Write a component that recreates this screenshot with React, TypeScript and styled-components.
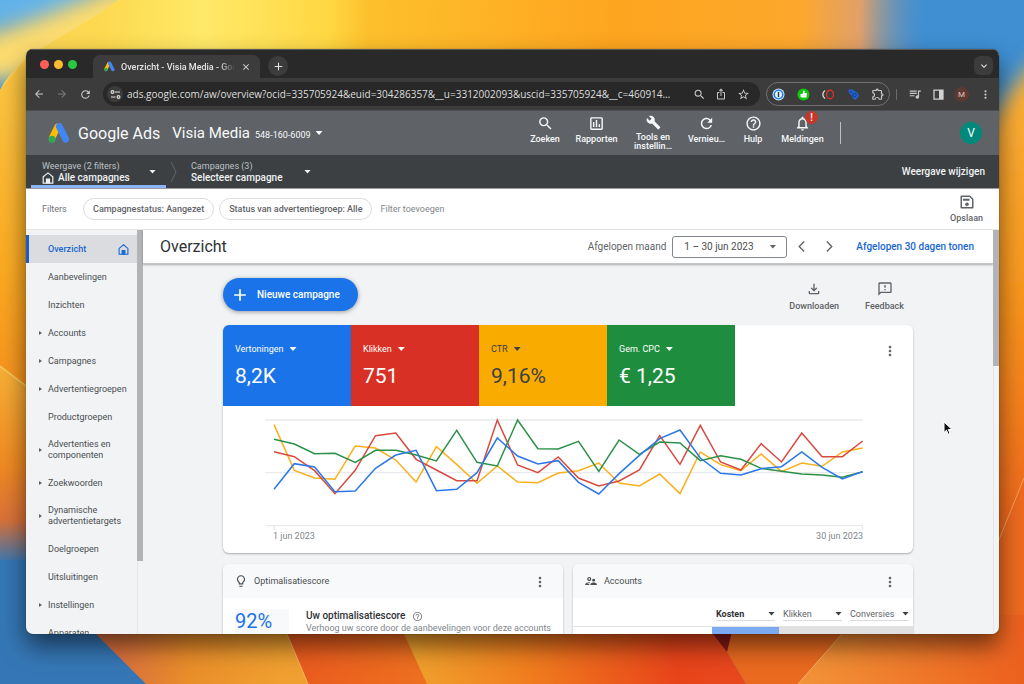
import React from "react";
import styled, { createGlobalStyle } from "styled-components";
import {
  MdArrowBack,
  MdArrowForward,
  MdBuild,
  MdClose,
  MdExpandMore,
  MdHelpOutline,
  MdIosShare,
  MdMoreVert,
  MdNotificationsNone,
  MdOutlineExtension,
  MdOutlineFeedback,
  MdOutlineFileDownload,
  MdOutlineInsertChart,
  MdOutlineLightbulb,
  MdOutlineSupervisorAccount,
  MdQueueMusic,
  MdRefresh,
  MdSearch,
  MdStarBorder,
  MdAdd,
  MdArrowBackIosNew,
  MdArrowForwardIos,
} from "react-icons/md";

const GlobalStyle = createGlobalStyle`
  * { box-sizing: border-box; }
  body { margin: 0; font-family: Roboto, "Liberation Sans", sans-serif; font-size: 9px; color: #3c4043; }
  button, select, input { font: inherit; color: inherit; background: none; border: 0; padding: 0; margin: 0; }
  button { cursor: pointer; }
  a { text-decoration: none; color: inherit; }
  h1, h2, h3, p, ul { margin: 0; padding: 0; font-weight: 400; }
  svg { display: block; flex: none; }
`;

const Desktop = styled.div`
  position: relative;
  height: 100vh;
  padding: 49px 25px 50px 26px;
  display: flex;
  overflow: hidden;
`;
const Wallpaper = styled.svg`
  position: absolute;
  inset: 0;
  width: 100%;
  height: 100%;
`;
const Pointer = styled.svg`
  position: absolute;
  left: 943px;
  top: 421px;
`;
const Window = styled.div`
  position: relative;
  flex: 1;
  min-width: 0;
  display: flex;
  flex-direction: column;
  overflow: hidden;
  border-radius: 7px;
  background: #f1f3f4;
  box-shadow: 0 0 1px rgba(0, 0, 0, 0.7), 0 12px 24px rgba(0, 0, 0, 0.55);
`;

/* Browser chrome */
const TabStrip = styled.div`
  flex: none;
  height: 29px;
  display: flex;
  align-items: flex-end;
  padding: 0 6px 0 14px;
  background: #292929;
  border-top: 1px solid #5a5a5a;
`;
const Lights = styled.div`
  display: flex;
  gap: 5px;
  margin-right: 16px;
  align-self: center;
`;
const Light = styled.span<{ $color: string }>`
  width: 9px;
  height: 9px;
  border-radius: 50%;
  background: ${(p) => p.$color};
`;
const Tab = styled.div`
  width: 167px;
  height: 23px;
  display: flex;
  align-items: center;
  gap: 6px;
  padding: 0 9px 0 11px;
  border-radius: 7px 7px 0 0;
  background: #3c3c3c;
  color: #e3e3e3;
  font-weight: 500;
`;
const TabTitle = styled.span`
  flex: 1;
  overflow: hidden;
  white-space: nowrap;
  mask-image: linear-gradient(90deg, #000 86%, transparent);
`;
const RoundButton = styled.button<{ $size: number; $radius?: string; $bg?: string }>`
  flex: none;
  width: ${(p) => p.$size}px;
  height: ${(p) => p.$size}px;
  border-radius: ${(p) => p.$radius ?? "50%"};
  background: ${(p) => p.$bg ?? "none"};
  display: grid;
  place-items: center;
  color: #dfe3ea;
`;
const StripActions = styled.div`
  flex: 1;
  height: 22px;
  display: flex;
  justify-content: space-between;
  padding-left: 8px;
`;
const Toolbar = styled.div`
  flex: none;
  height: 33px;
  display: flex;
  align-items: center;
  padding: 0 7px 0 6px;
  background: #3c3c3c;
  color: #c7c7c7;
  border-bottom: 1px solid #4c4d50;
`;
const NavButtons = styled.div`
  display: flex;
  gap: 9px;
  margin-right: 11px;
`;
const IconButton = styled.button<{ $dim?: boolean }>`
  min-width: 14px;
  height: 16px;
  display: grid;
  place-items: center;
  color: ${(p) => (p.$dim ? "#7a7a7a" : "inherit")};
`;
const Address = styled.div`
  flex: 1;
  min-width: 0;
  height: 24px;
  display: flex;
  align-items: center;
  gap: 8px;
  padding: 0 10px 0 4px;
  border-radius: 12px;
  background: #282828;
`;
const AddressInput = styled.input`
  flex: 1;
  min-width: 0;
  text-overflow: ellipsis;
  color: #dedede;
  font: 500 10px "Open Sans", sans-serif;
  margin-left: -4px;
`;
const Extensions = styled.div`
  width: 124px;
  height: 24px;
  margin: 0 6px;
  padding: 0 4px;
  display: flex;
  align-items: center;
  justify-content: space-between;
  border: 1px solid #717171;
  border-radius: 12px;
`;
const ToolbarEnd = styled.div`
  display: flex;
  align-items: center;
  gap: 9px;
`;
const Separator = styled.span`
  width: 1px;
  height: 11px;
  margin-right: 2px;
  background: #6a6a6a;
`;
const Profile = styled.button`
  width: 15px;
  height: 15px;
  border-radius: 50%;
  background: #5b3a31;
  color: #e3c6bd;
  font-size: 8px;
`;

/* Google Ads header */
const AdsHeader = styled.header`
  flex: none;
  height: 44px;
  display: flex;
  align-items: center;
  padding: 0 17px 0 22px;
  background: #5f6368;
  color: #f8f9fa;
`;
const Brand = styled.a`
  display: flex;
  align-items: center;
  gap: 8px;
  font-size: 16px;
  white-space: nowrap;
`;
const Account = styled.button`
  display: flex;
  align-items: center;
  gap: 5px;
  margin-left: 12px;
  font-size: 15px;
  white-space: nowrap;
`;
const AccountId = styled.span`
  font-size: 9px;
  padding-top: 3px;
`;
const Caret = styled.span<{ $muted?: boolean }>`
  flex: none;
  width: 7px;
  height: 4px;
  background: ${(p) => (p.$muted ? "#5f6368" : "currentColor")};
  clip-path: polygon(0 0, 100% 0, 50% 100%);
`;
const HeaderTools = styled.nav`
  flex: 1;
  height: 36px;
  display: flex;
  justify-content: flex-end;
  gap: 15px;
`;
const Tool = styled.button<{ $width: number }>`
  position: relative;
  width: ${(p) => p.$width}px;
  display: flex;
  flex-direction: column;
  align-items: center;
  gap: 3px;
  font-weight: 500;
  line-height: 9px;
  white-space: nowrap;
`;
const ToolIcon = styled.span`
  height: 17px;
  display: grid;
  place-items: center;
`;
const Alert = styled.span`
  position: absolute;
  top: -4px;
  right: 6px;
  width: 13px;
  height: 13px;
  border-radius: 50%;
  background: #c5372c;
  font-size: 10px;
  line-height: 13px;
`;
const User = styled.div`
  width: 142px;
  height: 22px;
  margin-left: 16px;
  border-left: 1px solid #bdc1c6;
  display: flex;
  justify-content: flex-end;
`;
const Avatar = styled.button`
  width: 22px;
  height: 22px;
  border-radius: 50%;
  background: #00897b;
  color: #fff;
  font-size: 12px;
`;

/* Scope navigation */
const ScopeBar = styled.nav`
  flex: none;
  height: 34px;
  display: flex;
  align-items: stretch;
  padding: 0 14px 0 5px;
  background: #3c4043;
  border-bottom: 1px solid #9a9da0;
  color: #f1f3f4;
`;
const Scope = styled.button<{ $active?: boolean }>`
  width: ${(p) => (p.$active ? "135px" : "143px")};
  display: flex;
  align-items: center;
  justify-content: space-between;
  padding: ${(p) => (p.$active ? "3px 10px 0 11px" : "3px 10px 0 13px")};
  border-bottom: 3px solid ${(p) => (p.$active ? "#8ab4f8" : "transparent")};
  text-align: left;
`;
const ScopeText = styled.span`
  display: flex;
  flex-direction: column;
  line-height: 12px;
`;
const ScopeLabel = styled.span`
  color: #bdc1c6;
`;
const ScopeValue = styled.span`
  display: flex;
  align-items: center;
  gap: 4px;
  font-size: 10px;
  font-weight: 500;
`;
const ChangeView = styled.button`
  margin-left: auto;
  font-size: 10px;
  font-weight: 500;
`;

/* Filters */
const FilterBar = styled.div`
  flex: none;
  height: 41px;
  display: flex;
  align-items: center;
  padding: 0 16px;
  background: #fff;
  border-bottom: 1px solid #e4e6e8;
  color: #6f7377;
`;
const FilterLabel = styled.span`
  width: 41px;
`;
const Chip = styled.button`
  height: 22px;
  padding: 0 9px;
  margin-right: 5px;
  border: 1px solid #dadce0;
  border-radius: 11px;
  color: #5f6368;
  font-weight: 500;
`;
const AddFilter = styled.button`
  margin-left: 3px;
  color: #80868b;
`;
const StackedButton = styled.button`
  display: flex;
  flex-direction: column;
  align-items: center;
  gap: 4px;
  color: #5f6368;
  font-weight: 500;
`;
const SaveSlot = styled.div`
  margin-left: auto;
`;

/* Body */
const Body = styled.div`
  flex: 1;
  min-height: 0;
  display: flex;
`;
const Sidebar = styled.nav`
  flex: none;
  width: 117px;
  display: flex;
  overflow: hidden;
`;
const MenuList = styled.ul`
  flex: 1;
  list-style: none;
  padding-top: 5px;
`;
const MenuLink = styled.a<{ $active?: boolean }>`
  min-height: 28px;
  padding: 8px 8px 8px 12px;
  display: flex;
  align-items: center;
  line-height: 11px;
  background: ${(p) => (p.$active ? "#dadce0" : "none")};
  box-shadow: ${(p) => (p.$active ? "inset 3px 0 #1a5dc8" : "none")};
  color: ${(p) => (p.$active ? "#1967d2" : "#4a4e52")};
  font-weight: ${(p) => (p.$active ? 500 : 400)};
`;
const Arrow = styled.span<{ $shown?: boolean }>`
  flex: none;
  width: 3px;
  height: 4px;
  margin: 0 6px 0 1px;
  background: ${(p) => (p.$shown ? "#5f6368" : "none")};
  clip-path: polygon(0 0, 100% 50%, 0 100%);
`;
const MenuText = styled.span`
  flex: 1;
`;
const Track = styled.div<{ $thumb: string }>`
  flex: none;
  width: 6px;
  border-left: 1px solid #e4e6e8;
  &::before {
    content: "";
    display: block;
    margin-left: -1px;
    height: ${(p) => p.$thumb};
    background: #b1b3b5;
  }
`;
const Main = styled.main`
  flex: 1;
  min-width: 0;
`;
const PageHeader = styled.div`
  height: 34px;
  display: flex;
  align-items: center;
  padding: 0 19px 0 17px;
  background: #fff;
  border-bottom: 1px solid #c4c7c9;
  box-shadow: 0 1px 2px rgba(60, 64, 67, 0.4);
  font-size: 10px;
  color: #5f6368;
`;
const Title = styled.h1`
  flex: 1;
  font-size: 16px;
  color: #303236;
`;
const DateField = styled.label`
  display: flex;
  align-items: center;
  gap: 6px;
`;
const SelectWrap = styled.span`
  display: inline-flex;
  align-items: center;
`;
const DateSelect = styled.select`
  appearance: none;
  width: 115px;
  height: 22px;
  padding: 0 11px;
  margin-right: -18px;
  border: 1px solid #80868b;
  border-radius: 3px;
  color: #4a4e52;
`;
const Stepper = styled.div`
  display: flex;
  gap: 14px;
  margin: 0 20px 0 18px;
`;
const RangeLink = styled.a`
  color: #1967d2;
  font-weight: 500;
`;
const Content = styled.div`
  max-width: 690px;
  margin: 0 auto;
  padding-top: 14px;
  display: flex;
  flex-direction: column;
`;
const ActionRow = styled.div`
  height: 33px;
  display: flex;
  justify-content: space-between;
  margin-bottom: 14px;
`;
const NewCampaign = styled.button`
  display: flex;
  align-items: center;
  gap: 7px;
  padding: 0 18px 0 7px;
  border-radius: 17px;
  background: #1a73e8;
  color: #fff;
  font-size: 10px;
  font-weight: 500;
  box-shadow: 0 1px 4px rgba(60, 64, 67, 0.5);
`;
const ActionGroup = styled.div`
  display: flex;
  align-items: center;
  gap: 26px;
  padding: 2px 9px 0 0;
`;
const Card = styled.section`
  min-width: 0;
  overflow: hidden;
  border-radius: 6px;
  background: #fff;
  box-shadow: 0 1px 2px rgba(60, 64, 67, 0.4);
`;
const Metrics = styled.div`
  display: flex;
  justify-content: space-between;
  padding-right: 15px;
`;
const Tiles = styled.div`
  flex: none;
  width: 512px;
  display: grid;
  grid-template-columns: repeat(4, 1fr);
`;
const Tile = styled.div<{ $bg: string; $fg: string }>`
  height: 81px;
  padding: 18px 12px 0;
  background: ${(p) => p.$bg};
  color: ${(p) => p.$fg};
`;
const MetricSelect = styled.select`
  appearance: none;
  field-sizing: content;
  height: 12px;
  margin-right: 6px;
`;
const MetricValue = styled.p`
  margin-top: 8px;
  font-size: 21px;
  line-height: 26px;
`;
const MoreButton = styled.button`
  width: 16px;
  height: 14px;
  display: grid;
  place-items: center;
  color: #5f6368;
`;
const MetricsMore = styled.div`
  padding-top: 18px;
`;
const Chart = styled.figure`
  margin: 0;
  padding: 9px 50px 10px 42px;
  svg { width: 100%; height: auto; overflow: visible; }
`;
const ChartDates = styled.figcaption`
  display: flex;
  justify-content: space-between;
  padding-left: 8px;
  color: #80868b;
  line-height: 13px;
`;
const CardGrid = styled.div`
  display: grid;
  grid-template-columns: 1fr 1fr;
  gap: 10px;
  margin-top: 11px;
`;
const CardHeader = styled.div`
  height: 34px;
  display: flex;
  align-items: center;
  gap: 6px;
  padding: 0 15px 0 11px;
  background: #f8f9fa;
  color: #4a4e52;
`;
const CardTitle = styled.h2`
  flex: 1;
  font-size: 9px;
`;
const Score = styled.div`
  display: flex;
  gap: 17px;
  padding: 11px 12px;
`;
const ScoreValue = styled.div`
  width: 55px;
  height: 60px;
  background: #f8f9fa;
  color: #1a73e8;
  font-size: 20px;
  line-height: 25px;
`;
const ScoreTitle = styled.h3`
  display: flex;
  align-items: center;
  gap: 7px;
  font-size: 10px;
  font-weight: 500;
  line-height: 14px;
  color: #303236;
`;
const ScoreText = styled.p`
  color: #80868b;
  white-space: nowrap;
`;
const Table = styled.table`
  width: 100%;
  table-layout: fixed;
  border-collapse: collapse;
  th { height: 28px; padding: 4px 4px 0; border-bottom: 1px solid #e0e2e5; text-align: left; font-weight: 400; }
  th:not(:first-child) { width: 67px; }
  td { height: 40px; padding: 0; background: #e0e0e0; }
  td:first-child { background: #fff; }
  td:nth-child(2) { background: #7baaf0; }
`;
const ColumnField = styled.span`
  display: flex;
  align-items: center;
  border-bottom: 1px solid #dadce0;
`;
const ColumnSelect = styled.select<{ $strong?: boolean }>`
  appearance: none;
  width: 100%;
  height: 12px;
  margin-right: -7px;
  font-weight: ${(p) => (p.$strong ? 700 : 400)};
  color: ${(p) => (p.$strong ? "#303236" : "#5f6368")};
`;

const AdsLogo = ({ size }: { size: number }) => (
  <svg width={size} height={size} viewBox="0 0 22 22">
    <path d="M9.500 5 4.300 15.500" stroke="#fbbc04" strokeWidth="6.500" strokeLinecap="round" />
    <circle cx="4" cy="17.300" r="3.500" fill="#34a853" />
    <path d="m11.300 4.500 6.400 12.700" stroke="#4285f4" strokeWidth="6.800" strokeLinecap="round" />
  </svg>
);

const HouseIcon = ({ size = 11 }: { size?: number }) => (
  <svg width={size} height={size} viewBox="0 0 20 20" fill="none" stroke="currentColor" strokeWidth="2">
    <path d="M2 18.500V8l8-6.500L18 8v10.500z" />
    <path d="M7.500 18v-6h5v6z" fill="currentColor" />
  </svg>
);

const TuneIcon = () => (
  <svg width="11" height="11" viewBox="0 0 22 22" fill="none" stroke="#dedede" strokeWidth="2.4">
    <circle cx="5" cy="6" r="2.8" />
    <path d="M10 6h10M2 16h9" />
    <circle cx="17" cy="16" r="2.8" />
  </svg>
);

const SaveIcon = () => (
  <svg width="14" height="14" viewBox="0 0 28 28" fill="none" stroke="#5f6368" strokeWidth="3">
    <path d="M2.5 2.5h17l6 6v17h-23z" strokeLinejoin="round" />
    <path d="M6 9.5h13" strokeWidth="4" />
    <circle cx="14" cy="18.5" r="3.6" fill="#5f6368" stroke="none" />
  </svg>
);

const PanelIcon = () => (
  <svg width="11" height="11" viewBox="0 0 22 22">
    <path d="M2 2h18v18H2z" fill="none" stroke="#d0d0d0" strokeWidth="2.5" />
    <path d="M12 2h8v18h-8z" fill="#d0d0d0" />
  </svg>
);

const PasswordIcon = () => (
  <svg width="13" height="13" viewBox="0 0 26 26">
    <circle cx="13" cy="13" r="12" fill="#dbe9fb" />
    <circle cx="13" cy="13" r="8.5" fill="#f2f7ff" stroke="#1f7fe8" strokeWidth="3.4" />
    <path d="M11.5 8h3v10h-3z" fill="#1d3c66" />
  </svg>
);
const ThumbIcon = () => (
  <svg width="13" height="13" viewBox="0 0 26 26">
    <circle cx="13" cy="13" r="12" fill="#12c80e" />
    <path d="M7 12h4l2-7c3 0 3 2 2 5h5l-1 9H9l-2-2z" fill="#fff" />
  </svg>
);
const RingsIcon = () => (
  <svg width="13" height="13" viewBox="0 0 26 26" fill="none" strokeWidth="2.6">
    <path d="M6 5a9.500 9.500 0 0 0 0 16" stroke="#ddd" />
    <ellipse cx="16" cy="13" rx="7" ry="8.500" stroke="#d93030" />
  </svg>
);
const TagIcon = () => (
  <svg width="13" height="13" viewBox="0 0 26 26">
    <path d="M3 3h9l3 3 6 3 3 7-7 8-5-3-2-5-6-6z" fill="#1f62d6" />
    <circle cx="15" cy="14" r="3.500" fill="none" stroke="#163f85" strokeWidth="2" />
    <circle cx="8" cy="8" r="1.800" fill="#163f85" />
  </svg>
);

type MenuEntry = { label: React.ReactNode; sub?: boolean; active?: boolean };
const menu: MenuEntry[] = [
  { label: "Overzicht", active: true },
  { label: "Aanbevelingen" },
  { label: "Inzichten" },
  { label: "Accounts", sub: true },
  { label: "Campagnes", sub: true },
  { label: "Advertentiegroepen", sub: true },
  { label: "Productgroepen" },
  { label: <>Advertenties en<br />componenten</>, sub: true },
  { label: "Zoekwoorden", sub: true },
  { label: <>Dynamische<br />advertentietargets</>, sub: true },
  { label: "Doelgroepen" },
  { label: "Uitsluitingen" },
  { label: "Instellingen", sub: true },
  { label: "Apparaten" },
];

const metrics = [
  { name: "Vertoningen", value: "8,2K", bg: "#1a73e8", fg: "#fff" },
  { name: "Klikken", value: "751", bg: "#d93025", fg: "#fff" },
  { name: "CTR", value: "9,16%", bg: "#f9ab00", fg: "#3c4043" },
  { name: "Gem. CPC", value: "€ 1,25", bg: "#1e8e3e", fg: "#fff" },
];

const series = [
  { color: "#fbb01b", values: [14, 151, 174, 178, 78, 84, 120, 186, 80, 133, 190, 138, 186, 188, 159, 152, 129, 189, 198, 162, 221, 96, 134, 152, 102, 155, 129, 139, 96, 84] },
  { color: "#d84a3f", values: [95, 110, 152, 221, 151, 47, 39, 118, 150, 182, 182, 0, 135, 158, 111, 174, 198, 183, 150, 47, 133, 16, 126, 150, 71, 126, 39, 110, 110, 63] },
  { color: "#2b9148", values: [58, 72, 101, 100, 127, 91, 91, 105, 123, 31, 127, 138, 0, 86, 87, 64, 154, 60, 103, 66, 69, 122, 107, 118, 145, 154, 162, 165, 172, 155] },
  { color: "#2a78e8", values: [208, 131, 141, 215, 213, 145, 105, 91, 212, 208, 158, 54, 108, 132, 122, 187, 222, 161, 106, 56, 30, 114, 160, 165, 146, 140, 96, 142, 177, 155] },
];

const tools = [
  { icon: <MdSearch size={17} />, label: "Zoeken", width: 30 },
  { icon: <MdOutlineInsertChart size={17} />, label: "Rapporten", width: 43 },
  { icon: <MdBuild size={15} />, label: <>Tools en<br />instellin…</>, width: 40 },
  { icon: <MdRefresh size={17} />, label: "Vernieu…", width: 37 },
  { icon: <MdHelpOutline size={17} />, label: "Hulp", width: 26 },
  { icon: <MdNotificationsNone size={17} />, label: "Meldingen", width: 43, alert: true },
];

function WallpaperArt() {
  return (
    <Wallpaper viewBox="0 0 1024 684" preserveAspectRatio="none" aria-hidden="true">
      <defs>
        <linearGradient id="top" gradientUnits="userSpaceOnUse" x1="0" x2="1024" y1="0" y2="30">
          <stop offset="0" stopColor="#fbd257" />
          <stop offset="0.1" stopColor="#fdd94f" />
          <stop offset="0.2" stopColor="#ffe968" />
          <stop offset="0.32" stopColor="#ffd843" />
          <stop offset="0.36" stopColor="#fdc02c" />
          <stop offset="0.6" stopColor="#fea51f" />
          <stop offset="0.78" stopColor="#fda82c" />
          <stop offset="0.84" stopColor="#e0a06a" />
          <stop offset="0.91" stopColor="#3f8fd2" stopOpacity="0" />
        </linearGradient>
        <linearGradient id="left" x1="0" x2="0" y1="0" y2="1">
          <stop offset="0" stopColor="#fcc845" />
          <stop offset="0.6" stopColor="#fbaa22" />
          <stop offset="1" stopColor="#f58d1c" />
        </linearGradient>
        <linearGradient id="lower" x1="0" x2="0" y1="0" y2="1">
          <stop offset="0" stopColor="#f6b136" />
          <stop offset="0.5" stopColor="#f08a22" />
          <stop offset="0.78" stopColor="#d9713a" />
          <stop offset="1" stopColor="#3577b6" />
        </linearGradient>
        <linearGradient id="right" x1="0" x2="0" y1="0" y2="1">
          <stop offset="0" stopColor="#fbb43c" />
          <stop offset="0.35" stopColor="#f9981f" />
          <stop offset="0.75" stopColor="#ee5f1b" />
          <stop offset="1" stopColor="#ec5a1c" />
        </linearGradient>
        <linearGradient id="petalA" x1="0" x2="1" y1="0" y2="0">
          <stop offset="0.15" stopColor="#d9703c" />
          <stop offset="0.45" stopColor="#ea8e2a" />
          <stop offset="0.85" stopColor="#f0a030" />
        </linearGradient>
        <linearGradient id="petalB" x1="0" x2="1" y1="0" y2="0">
          <stop offset="0" stopColor="#ea591e" />
          <stop offset="1" stopColor="#ee7420" />
        </linearGradient>
        <linearGradient id="petalC" x1="0" x2="1" y1="0" y2="0">
          <stop offset="0" stopColor="#f0a52f" />
          <stop offset="0.35" stopColor="#f0801f" />
          <stop offset="0.8" stopColor="#e8441a" />
          <stop offset="1" stopColor="#e8481e" />
        </linearGradient>
        <linearGradient id="petalD" x1="0" x2="1" y1="0" y2="0">
          <stop offset="0" stopColor="#f29438" />
          <stop offset="1" stopColor="#ec601e" />
        </linearGradient>
        <filter id="soft" x="-20%" y="-20%" width="140%" height="140%">
          <feGaussianBlur stdDeviation="10" />
        </filter>
      </defs>
      <rect width="1024" height="684" fill="#3f8fd2" />
      <path d="M-30-30H140L60 20-30 34z" fill="#62b2ea" filter="url(#soft)" />
      <path d="M-20 36C20 26 60 10 130-20V80H-20z" fill="#fddc70" filter="url(#soft)" />
      <path d="M0 90C20 50 76 34 118 0H960V120H0z" fill="url(#top)" />
      <path d="M0 90 26 58H60V412L0 366z" fill="url(#left)" />
      <path d="M0 366 60 410V564H0z" fill="url(#lower)" />
      <path d="M0 366 30 389" stroke="#fbc961" strokeWidth="1.500" />
      <path d="M0 560H60L160 700H0z" fill="#3577b6" />
      <path d="M1060 40C1010 80 990 120 960 180V740H1060z" fill="url(#right)" filter="url(#soft)" />
      <path d="M1024 478 994 552V684H1024z" fill="#ee6a20" />
      <path d="M1024 478 994 552" stroke="#f5a45a" />
      <path d="M85 615 96 634 146 684H320V600H85z" fill="url(#petalA)" />
      <path d="M284 615 287 634 308 684H450L400 615z" fill="url(#petalB)" />
      <path d="M287 634 308 684" stroke="#f5b860" />
      <path d="M399 615 404 634 427 684H746L712 625z" fill="url(#petalC)" />
      <path d="M708 615 727 652 746 684H798L860 615z" fill="#ea6a1f" />
      <path d="M706 615 713 634 727 652 736 615z" fill="#8a1a16" />
      <path d="M850 615 842 634 798 684H1024V615z" fill="url(#petalD)" />
      <path d="M842 634 798 684" stroke="#f7b266" />
    </Wallpaper>
  );
}

export default function App() {
  return (
    <>
      <GlobalStyle />
      <Desktop>
        <WallpaperArt />
        <Window>
          <TabStrip>
            <Lights>
              <Light $color="#ff5f57" />
              <Light $color="#febc2e" />
              <Light $color="#28c840" />
            </Lights>
            <Tab>
              <AdsLogo size={11} />
              <TabTitle>Overzicht - Visia Media - Goo</TabTitle>
              <MdClose size={10} />
            </Tab>
            <StripActions>
              <RoundButton $size={20} $bg="#3c3c3c" aria-label="Nieuw tabblad"><MdAdd size={13} /></RoundButton>
              <RoundButton $size={19} $radius="6px" $bg="#3c3c3c" aria-label="Tabbladen zoeken"><MdExpandMore size={12} /></RoundButton>
            </StripActions>
          </TabStrip>
          <Toolbar>
            <NavButtons>
              <IconButton aria-label="Terug"><MdArrowBack size={12} /></IconButton>
              <IconButton aria-label="Vooruit" $dim><MdArrowForward size={12} /></IconButton>
              <IconButton aria-label="Vernieuwen"><MdRefresh size={13} /></IconButton>
            </NavButtons>
            <Address>
              <RoundButton $size={16} $bg="#3c3c3c" aria-label="Sitegegevens"><TuneIcon /></RoundButton>
              <AddressInput
                aria-label="Adres"
                defaultValue="ads.google.com/aw/overview?ocid=335705924&euid=304286357&__u=3312002093&uscid=335705924&__c=460914…"
              />
              <IconButton aria-label="Zoom"><MdSearch size={13} /></IconButton>
              <IconButton aria-label="Delen"><MdIosShare size={12} /></IconButton>
              <IconButton aria-label="Bookmark"><MdStarBorder size={13} /></IconButton>
            </Address>
            <Extensions>
              <IconButton aria-label="Wachtwoorden"><PasswordIcon /></IconButton>
              <IconButton aria-label="Duim"><ThumbIcon /></IconButton>
              <IconButton aria-label="Ringen"><RingsIcon /></IconButton>
              <IconButton aria-label="Tags"><TagIcon /></IconButton>
              <IconButton aria-label="Extensies"><MdOutlineExtension size={14} /></IconButton>
            </Extensions>
            <ToolbarEnd>
              <Separator />
              <IconButton aria-label="Media"><MdQueueMusic size={14} /></IconButton>
              <IconButton aria-label="Zijpaneel"><PanelIcon /></IconButton>
              <Profile>M</Profile>
              <IconButton aria-label="Menu"><MdMoreVert size={13} /></IconButton>
            </ToolbarEnd>
          </Toolbar>

          <AdsHeader>
            <Brand href="#"><AdsLogo size={22} />Google Ads</Brand>
            <Account>
              Visia Media<AccountId>548-160-6009</AccountId><Caret />
            </Account>
            <HeaderTools>
              {tools.map((t, i) => (
                <Tool key={i} $width={t.width}>
                  <ToolIcon>{t.icon}</ToolIcon>
                  <span>{t.label}</span>
                  {t.alert && <Alert>!</Alert>}
                </Tool>
              ))}
            </HeaderTools>
            <User><Avatar>V</Avatar></User>
          </AdsHeader>

          <ScopeBar>
            <Scope $active>
              <ScopeText>
                <ScopeLabel>Weergave (2 filters)</ScopeLabel>
                <ScopeValue><HouseIcon size={12} />Alle campagnes</ScopeValue>
              </ScopeText>
              <Caret />
            </Scope>
            <svg width="12" height="33" viewBox="0 0 12 33" fill="none" stroke="#5f6368">
              <path d="m5 7 5 10-5 10" />
            </svg>
            <Scope>
              <ScopeText>
                <ScopeLabel>Campagnes (3)</ScopeLabel>
                <ScopeValue>Selecteer campagne</ScopeValue>
              </ScopeText>
              <Caret />
            </Scope>
            <ChangeView>Weergave wijzigen</ChangeView>
          </ScopeBar>

          <FilterBar>
            <FilterLabel>Filters</FilterLabel>
            <Chip>Campagnestatus: Aangezet</Chip>
            <Chip>Status van advertentiegroep: Alle</Chip>
            <AddFilter>Filter toevoegen</AddFilter>
            <SaveSlot><StackedButton><SaveIcon />Opslaan</StackedButton></SaveSlot>
          </FilterBar>

          <Body>
            <Sidebar>
              <MenuList>
                {menu.map((m, i) => (
                  <li key={i}>
                    <MenuLink href="#" $active={m.active}>
                      <Arrow $shown={m.sub} />
                      <MenuText>{m.label}</MenuText>
                      {m.active && <HouseIcon />}
                    </MenuLink>
                  </li>
                ))}
              </MenuList>
              <Track $thumb="82%" />
            </Sidebar>
            <Main>
              <PageHeader>
                <Title>Overzicht</Title>
                <DateField>
                  Afgelopen maand
                  <SelectWrap>
                    <DateSelect><option>1 – 30 jun 2023</option></DateSelect>
                    <Caret $muted />
                  </SelectWrap>
                </DateField>
                <Stepper>
                  <IconButton aria-label="Vorige periode"><MdArrowBackIosNew size={13} /></IconButton>
                  <IconButton aria-label="Volgende periode"><MdArrowForwardIos size={13} /></IconButton>
                </Stepper>
                <RangeLink href="#">Afgelopen 30 dagen tonen</RangeLink>
              </PageHeader>
              <Content>
                <ActionRow>
                  <NewCampaign><MdAdd size={20} />Nieuwe campagne</NewCampaign>
                  <ActionGroup>
                    <StackedButton><MdOutlineFileDownload size={16} />Downloaden</StackedButton>
                    <StackedButton><MdOutlineFeedback size={16} />Feedback</StackedButton>
                  </ActionGroup>
                </ActionRow>
                <Card>
                  <Metrics>
                    <Tiles>
                      {metrics.map((m) => (
                        <Tile key={m.name} $bg={m.bg} $fg={m.fg}>
                          <SelectWrap>
                            <MetricSelect aria-label="Statistiek"><option>{m.name}</option></MetricSelect>
                            <Caret />
                          </SelectWrap>
                          <MetricValue>{m.value}</MetricValue>
                        </Tile>
                      ))}
                    </Tiles>
                    <MetricsMore>
                      <MoreButton aria-label="Meer"><MdMoreVert size={16} /></MoreButton>
                    </MetricsMore>
                  </Metrics>
                  <Chart>
                    <svg viewBox="0 -15 1794 346" fill="none">
                      <path d="M0 0h1794M0 158h1794M0 317h1794M27 317v14M1792 317v14" stroke="#e8eaed" strokeWidth="4" />
                      {series.map((s) => (
                        <polyline
                          key={s.color}
                          points={s.values.map((v, i) => `${27 + i * 60.9},${v}`).join(" ")}
                          stroke={s.color}
                          strokeWidth="4.500"
                        />
                      ))}
                    </svg>
                    <ChartDates><span>1 jun 2023</span><span>30 jun 2023</span></ChartDates>
                  </Chart>
                </Card>
                <CardGrid>
                  <Card>
                    <CardHeader>
                      <MdOutlineLightbulb size={14} />
                      <CardTitle>Optimalisatiescore</CardTitle>
                      <MoreButton aria-label="Meer"><MdMoreVert size={16} /></MoreButton>
                    </CardHeader>
                    <Score>
                      <ScoreValue>92%</ScoreValue>
                      <div>
                        <ScoreTitle>Uw optimalisatiescore <MdHelpOutline size={11} color="#80868b" /></ScoreTitle>
                        <ScoreText>Verhoog uw score door de aanbevelingen voor deze accounts</ScoreText>
                      </div>
                    </Score>
                  </Card>
                  <Card>
                    <CardHeader>
                      <MdOutlineSupervisorAccount size={14} />
                      <CardTitle>Accounts</CardTitle>
                      <MoreButton aria-label="Meer"><MdMoreVert size={16} /></MoreButton>
                    </CardHeader>
                    <Table>
                      <thead>
                        <tr>
                          <th />
                          {["Kosten", "Klikken", "Conversies"].map((c, i) => (
                            <th key={c}>
                              <ColumnField>
                                <ColumnSelect aria-label="Kolom" $strong={i === 0}><option>{c}</option></ColumnSelect>
                                <Caret />
                              </ColumnField>
                            </th>
                          ))}
                        </tr>
                      </thead>
                      <tbody>
                        <tr><td /><td /><td /><td /></tr>
                      </tbody>
                    </Table>
                  </Card>
                </CardGrid>
              </Content>
            </Main>
            <Track $thumb="136px" />
          </Body>
        </Window>
        <Pointer width="11" height="15" viewBox="0 0 11 15" aria-hidden="true">
          <path d="M1 1v10.500l2.500-2.300 1.600 4 1.900-.8-1.700-3.900H9z" fill="#111" stroke="#fff" />
        </Pointer>
      </Desktop>
    </>
  );
}
